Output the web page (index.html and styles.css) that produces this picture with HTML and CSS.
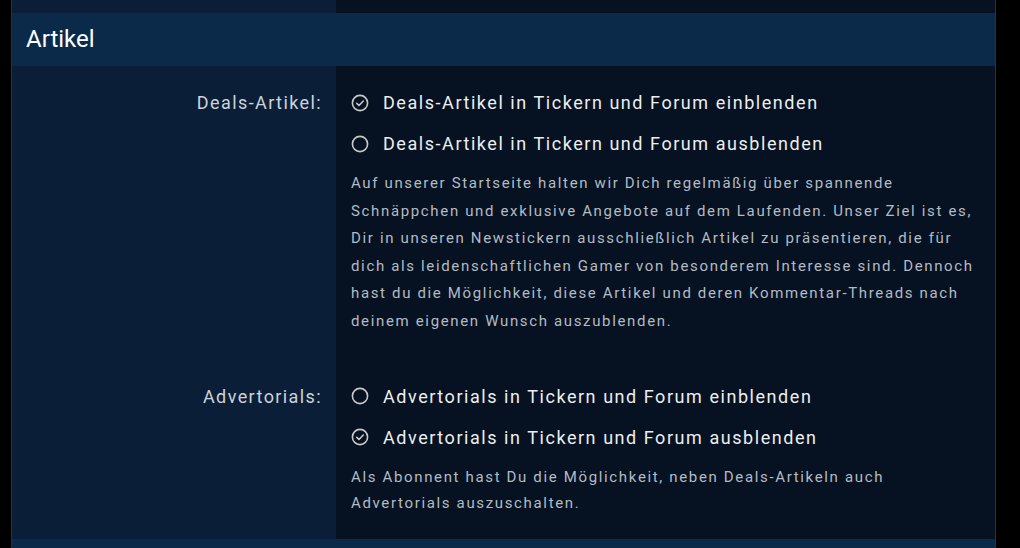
FILE: index.html
```html
<!DOCTYPE html>
<html>
  <head>
    <title>Einstellungen</title>
    <meta charset="utf-8" />
    <meta name="viewport" content="width=device-width, initial-scale=1.0" />
    <link rel="stylesheet" href="styles.css">
  </head>

  <body>
    <div class="panel">
      <div class="form-row top-row">
        <div class="label-col"></div>
        <div class="field-col"></div>
      </div>

      <h2 class="section-head">Artikel</h2>

      <div class="form-row">
        <div class="label-col">
          <span class="label">Deals-Artikel:</span>
        </div>
        <div class="field-col">
          <label class="option">
            <svg class="radio" viewBox="0 0 18 18"><circle cx="9" cy="9" r="7.6" /><path d="M5.8 9.4l2.2 2.1 4.3-4.5" /></svg>
            Deals-Artikel in Tickern und Forum einblenden
          </label>
          <label class="option">
            <svg class="radio" viewBox="0 0 18 18"><circle cx="9" cy="9" r="7.6" /></svg>
            Deals-Artikel in Tickern und Forum ausblenden
          </label>
          <p class="hint">
            Auf unserer Startseite halten wir Dich regelmäßig über spannende<br />
            Schnäppchen und exklusive Angebote auf dem Laufenden. Unser Ziel ist es,<br />
            Dir in unseren Newstickern ausschließlich Artikel zu präsentieren, die für<br />
            dich als leidenschaftlichen Gamer von besonderem Interesse sind. Dennoch<br />
            hast du die Möglichkeit, diese Artikel und deren Kommentar-Threads nach<br />
            deinem eigenen Wunsch auszublenden.
          </p>
        </div>
      </div>

      <div class="form-row last">
        <div class="label-col">
          <span class="label">Advertorials:</span>
        </div>
        <div class="field-col">
          <label class="option">
            <svg class="radio" viewBox="0 0 18 18"><circle cx="9" cy="9" r="7.6" /></svg>
            Advertorials in Tickern und Forum einblenden
          </label>
          <label class="option">
            <svg class="radio" viewBox="0 0 18 18"><circle cx="9" cy="9" r="7.6" /><path d="M5.8 9.4l2.2 2.1 4.3-4.5" /></svg>
            Advertorials in Tickern und Forum ausblenden
          </label>
          <p class="hint short">
            Als Abonnent hast Du die Möglichkeit, neben Deals-Artikeln auch<br />
            Advertorials auszuschalten.
          </p>
        </div>
      </div>

      <div class="section-head bottom"></div>
    </div>
  </body>
</html>
```

FILE: styles.css
```css
body {
  margin: 0;
  background-color: #000;
  font-family: Roboto, "Liberation Sans", Arial, sans-serif;
  color: #e6e8ea;
}

.panel {
  width: 983px;
  margin-left: 11px;
  border-left: 1px solid #17375a;
  border-right: 1px solid #17375a;
}

.form-row {
  display: grid;
  grid-template-columns: 324px 1fr;
}

.label-col {
  background-color: #0a1f37;
  text-align: right;
  padding: 16px 14px 0 0;
}

.field-col {
  background-color: #061221;
  padding: 16px 10px 24px 15px;
}

.form-row.last .field-col {
  padding-bottom: 22px;
}

.top-row {
  height: 13px;
}

.top-row .label-col,
.top-row .field-col {
  padding: 0;
}

.section-head {
  margin: 0;
  height: 53px;
  line-height: 53px;
  padding-left: 14px;
  background-color: #0b2a4a;
  font-size: 24px;
  font-weight: normal;
  color: #fff;
}

.section-head.bottom {
  height: 20px;
}

.label {
  display: block;
  line-height: 41px;
  font-size: 18px;
  letter-spacing: 1.4px;
  color: #ccd3da;
}

.option {
  display: flex;
  align-items: center;
  gap: 14px;
  height: 41px;
  font-size: 18px;
  letter-spacing: 1.55px;
  color: #eceef0;
}

.radio {
  flex: none;
  width: 18px;
  height: 18px;
  fill: none;
  stroke: #c8c8c8;
  stroke-width: 1.6;
  stroke-linecap: round;
  stroke-linejoin: round;
}

.hint {
  margin: 6px 0 0;
  font-size: 15px;
  line-height: 27.6px;
  letter-spacing: 1.65px;
  white-space: nowrap;
  color: #b3bbc4;
}

.hint.short {
  line-height: 26.5px;
}
```
